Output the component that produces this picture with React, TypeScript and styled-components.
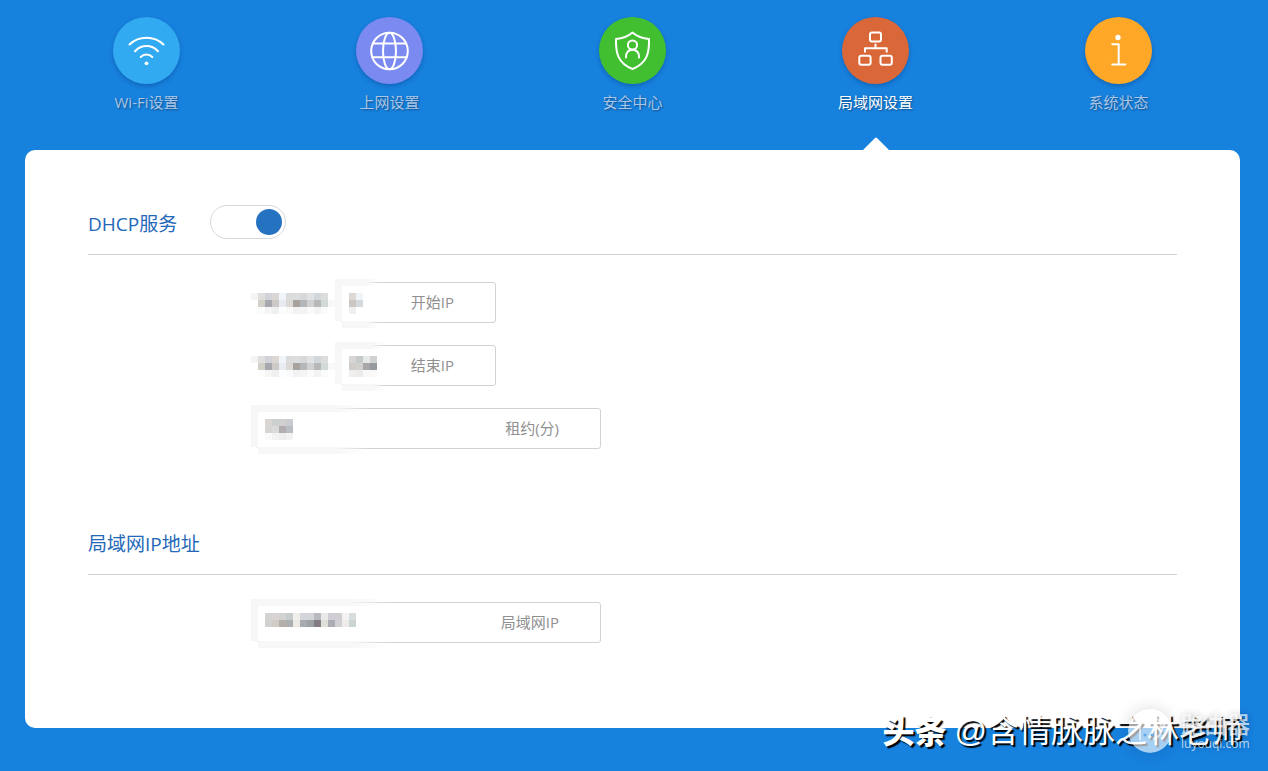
import React, { useState } from "react";
import styled, { createGlobalStyle } from "styled-components";

const GlobalStyle = createGlobalStyle`
  * { box-sizing: border-box; }
  body {
    margin: 0;
    background: #1781de;
    font-family: "Open Sans", "Noto Sans CJK SC", sans-serif;
    font-size: 15px;
    font-weight: 390;
  }
`;

const Page = styled.div`
  position: relative;
  padding: 0 28px 43px 25px;
`;

const Nav = styled.nav`
  display: grid;
  grid-template-columns: repeat(5, 1fr);
  height: 150px;
`;

const NavLink = styled.a<{ $active?: boolean }>`
  position: relative;
  display: flex;
  flex-direction: column;
  align-items: center;
  gap: 7px;
  padding-top: 17px;
  line-height: 22px;
  text-decoration: none;
  color: ${(p) => (p.$active ? "#ffffff" : "#a9c6e8")};
  font-weight: ${(p) => (p.$active ? 400 : 390)};
  text-shadow: 1px 1px 2px rgba(0, 0, 0, 0.4);
`;

const Pointer = styled.svg`
  position: absolute;
  bottom: 0;
  left: 50%;
  margin-left: -13px;
`;

const Badge = styled.span<{ $color: string }>`
  width: 67px;
  height: 67px;
  border-radius: 50%;
  background: ${(p) => p.$color};
  box-shadow: 0 2px 4px rgba(0, 40, 100, 0.3);

  svg {
    display: block;
    fill: none;
    stroke: #ffffff;
    stroke-width: 2;
    stroke-linecap: round;
    stroke-linejoin: round;
  }
`;

const Panel = styled.main`
  padding: 55px 63px 85px;
  border-radius: 10px;
  background: #ffffff;
`;

const Section = styled.section`
  & + & {
    margin-top: 76px;
  }
`;

const SectionHead = styled.header`
  display: flex;
  align-items: center;
  gap: 33px;
  height: 50px;
  padding-bottom: 15px;
  border-bottom: 1px solid #d2d2d2;
`;

const Title = styled.h2`
  margin: 0;
  padding-top: 4px;
  font-size: 19px;
  line-height: 34px;
  font-weight: 390;
  color: #2468b8;
`;

const Switch = styled.input`
  appearance: none;
  width: 76px;
  height: 34px;
  margin: 0;
  padding: 3px;
  border: 1px solid #d8d8d8;
  border-radius: 17px;
  background: #ffffff;
  cursor: pointer;

  &::before {
    content: "";
    display: block;
    width: 26px;
    height: 26px;
    border-radius: 50%;
    background: #9aa5b1;
  }

  &:checked::before {
    margin-left: auto;
    background: #2472c0;
  }
`;

const Fields = styled.div`
  display: flex;
  flex-direction: column;
  gap: 22px;
  padding: 27px 0 0 163px;
`;

const Row = styled.div`
  display: flex;
  align-items: center;
`;

const Prefix = styled.div`
  display: flex;
  width: 90px;
  padding-top: 2px;
`;

const Field = styled.div<{ $wide?: boolean }>`
  position: relative;
  display: flex;
  align-items: center;
  width: ${(p) => (p.$wide ? "344px" : "155px")};
  height: 41px;
  margin-left: ${(p) => (p.$wide ? "6px" : "0")};
  padding-right: 41px;
  border: 1px solid #d2d2d2;
  border-radius: 3px;
`;

const TextInput = styled.input`
  flex: 1;
  min-width: 0;
  height: 39px;
  padding: 0 8px;
  border: 0;
  outline: 0;
  background: transparent;
  font: inherit;
  color: #555555;
`;

const FieldLabel = styled.label`
  padding-bottom: 2px;
  color: #909090;
`;

const Mask = styled.svg`
  position: absolute;
  left: -7px;
  top: -4px;
  pointer-events: none;
`;

const Watermark = styled.div`
  position: absolute;
  right: 25px;
  bottom: 17px;
  display: flex;
  gap: 8px;
  font-size: 32px;
  line-height: 46px;
  font-weight: 400;
  color: #ffffff;
  text-shadow: 2px 2px 1px #000000;
  white-space: nowrap;

  strong {
    font-weight: 900;
  }

  span {
    font-family: "Liberation Sans", "Noto Sans CJK SC", sans-serif;
  }
`;

const SiteMark = styled.div`
  position: absolute;
  right: 18px;
  bottom: 18px;
  display: flex;
  align-items: center;
  gap: 9px;
  color: rgba(255, 255, 255, 0.7);
  text-shadow: 0 0 6px rgba(0, 0, 0, 0.25);

  svg {
    border-radius: 50%;
    box-shadow: 0 0 16px rgba(0, 0, 0, 0.15);
  }
`;

const SiteText = styled.div`
  display: flex;
  flex-direction: column;
  font-size: 23px;
  line-height: 26px;
  font-weight: 500;

  small {
    font-size: 12px;
    line-height: 14px;
    font-weight: 400;
  }
`;

const CELL = 7;

function Cells({ rows, x = 0, y = 0 }: { rows: string[]; x?: number; y?: number }) {
  return (
    <g shapeRendering="crispEdges">
      {rows.map((row, r) =>
        row.split(" ").map((c, i) =>
          c === "-" ? null : (
            <rect key={`${r}-${i}`} x={x + i * CELL} y={y + r * CELL} width={CELL} height={CELL} fill={`#${c}`} />
          )
        )
      )}
    </g>
  );
}

const PREFIX_ROWS = [
  "f5f4f3 dfdfe0 d2d3d6 dad7d5 f1f5fa dadbdc dcdddf d6d8da e0e2e3 d3d6da dcdddd",
  "- d3d0c8 a6a8ae cdc9c9 e8ecf2 dbdad6 a8a29f b4b6b9 cfd1d3 b8b8b8 d3d9d6 f8f8f8",
  "- fbfcfb f5f5f5 efeff0 fcfdff fafafa f3f2f2 f4f4f4 fafafa f3f3f3 fbfbfb",
];

function PrefixMask() {
  return (
    <Prefix>
      <svg width="84" height="21" aria-hidden="true">
        <Cells rows={PREFIX_ROWS} />
      </svg>
    </Prefix>
  );
}

function FieldMask({ id, width, rows }: { id: string; width: number; rows: string[] }) {
  return (
    <Mask width={width} height="49" aria-hidden="true">
      <defs>
        <linearGradient id={`${id}-edge`}>
          <stop offset="0.7" stopColor="#f7f7f7" />
          <stop offset="1" stopColor="#f7f7f7" stopOpacity="0" />
        </linearGradient>
      </defs>
      <rect width={width} height="7" fill={`url(#${id}-edge)`} />
      <rect x="7" y="42" width={width - 7} height="7" fill={`url(#${id}-edge)`} />
      <rect y="0" width="7" height="42" fill="#f7f7f7" />
      <rect x="7" y="7" width="28" height="35" fill="#ffffff" />
      <Cells rows={rows} x={14} y={14} />
    </Mask>
  );
}

type FieldProps = { id: string; label: string; wide?: boolean; maskWidth: number; rows: string[] };

function IpField({ id, label, wide, maskWidth, rows }: FieldProps) {
  return (
    <Field $wide={wide}>
      <TextInput id={id} type="text" />
      <FieldLabel htmlFor={id}>{label}</FieldLabel>
      <FieldMask id={id} width={maskWidth} rows={rows} />
    </Field>
  );
}

const NAV = [
  {
    label: "Wi-Fi设置",
    color: "#31aaf2",
    icon: (
      <>
        <path d="M16.5 27.5C26 18.5 41 18.5 50.5 27.5M22 34.2C28.5 27.4 38.5 27.4 45 34.2M27.7 40C31 36.8 36 36.8 39.3 40" />
        <circle cx="33.5" cy="46.3" r="1.9" fill="#fff" stroke="none" />
      </>
    ),
  },
  {
    label: "上网设置",
    color: "#7b8af0",
    icon: (
      <>
        <circle cx="33.5" cy="34" r="18.3" />
        <ellipse cx="33.5" cy="34" rx="6.5" ry="18.3" />
        <path d="M17 26.4H50M16.5 40.2H50.5" />
      </>
    ),
  },
  {
    label: "安全中心",
    color: "#41bf30",
    icon: (
      <>
        <path d="M33.5 15.5C29 19.5 23.5 21.5 17 22C16.6 36 19 46.5 33.5 52C48 46.5 50.4 36 50 22C43.5 21.5 38 19.5 33.5 15.5Z" />
        <circle cx="33.5" cy="28" r="4.6" />
        <path d="M27 40.5C27 35.5 29.5 32.8 33.5 32.8S40 35.5 40 40.5" />
      </>
    ),
  },
  {
    label: "局域网设置",
    color: "#da6737",
    active: true,
    icon: (
      <>
        <rect x="28" y="15.5" width="11" height="9" rx="2" />
        <rect x="17.3" y="38.7" width="11.3" height="9" rx="2" />
        <rect x="38.5" y="38.7" width="11.3" height="9" rx="2" />
        <path d="M33.5 27.5V31.2M23 34.8V31.2H44.7V34.8" />
      </>
    ),
  },
  {
    label: "系统状态",
    color: "#ffa726",
    icon: (
      <>
        <circle cx="33" cy="20.5" r="2.7" fill="#fff" stroke="none" />
        <path d="M27.2 27.2H33.7V47.4M27.2 47.4H40.3" />
      </>
    ),
  },
];

export default function App() {
  const [dhcp, setDhcp] = useState(true);
  return (
    <Page>
      <GlobalStyle />
      <Nav>
        {NAV.map((item) => (
          <NavLink key={item.label} href="#" $active={item.active}>
            <Badge $color={item.color}>
              <svg width="67" height="67" viewBox="0 0 67 67" aria-hidden="true">
                {item.icon}
              </svg>
            </Badge>
            {item.label}
            {item.active && (
              <Pointer width="26" height="13" viewBox="0 0 26 13" aria-hidden="true">
                <path d="M0 13L12 1Q13 0 14 1L26 13Z" fill="#fff" />
              </Pointer>
            )}
          </NavLink>
        ))}
      </Nav>

      <Panel>
        <Section>
          <SectionHead>
            <Title id="dhcp-title">DHCP服务</Title>
            <Switch
              type="checkbox"
              aria-labelledby="dhcp-title"
              checked={dhcp}
              onChange={(e) => setDhcp(e.target.checked)}
            />
          </SectionHead>
          <Fields>
            <Row>
              <PrefixMask />
              <IpField
                id="start-ip"
                label="开始IP"
                maskWidth={44}
                rows={["dcd8d3 f0f4f9", "cbc5c3 d4d9dc", "efefef -"]}
              />
            </Row>
            <Row>
              <PrefixMask />
              <IpField
                id="end-ip"
                label="结束IP"
                maskWidth={50}
                rows={["d7d6d4 c7caca e6e8ea d0d2d2", "cfccc9 d0d0cf a8a6a6 959b9e", "f0efee ebebeb f8f8f8 fafafa"]}
              />
            </Row>
            <Row>
              <IpField
                id="lease"
                label="租约(分)"
                wide
                maskWidth={118}
                rows={["dad6d4 ccd0d1 d0cecf c8ccd0", "d8d4d4 dadadb b0acaf babdc2", "fafafa f2f2f2 eeeeee f2f2f2"]}
              />
            </Row>
          </Fields>
        </Section>

        <Section>
          <SectionHead>
            <Title>局域网IP地址</Title>
          </SectionHead>
          <Fields>
            <Row>
              <IpField
                id="lan-ip"
                label="局域网IP"
                wide
                maskWidth={140}
                rows={[
                  "d3d3d2 d8d4d3 d2d3d3 c6cbcb f1efeb d3d6da d2d4d6 b9babe e8e9e8 d0ced4 d0ced2 f5f3f2 d8dedf",
                  "d2d1cf d0cdc4 b4afaa acafb2 eeebe6 a8aab2 9da3a4 847c84 dedfd9 acadb5 d2d0d3 eeece8 cdd5d3",
                ]}
              />
            </Row>
          </Fields>
        </Section>
      </Panel>

      <Watermark>
        <strong>头条</strong>
        <span>@含情脉脉之林老师</span>
      </Watermark>
      <SiteMark>
        <svg width="44" height="44" viewBox="0 0 44 44" aria-hidden="true">
          <circle cx="22" cy="22" r="22" fill="#fff" fillOpacity="0.62" />
          <g fill="none" stroke="#fff" strokeOpacity="0.6" strokeWidth="2">
            <path d="M12 31V20A11 11 0 1 1 25 30" />
          </g>
          <g fill="#5fa9e8">
            <circle cx="17" cy="26" r="1.5" />
            <circle cx="24" cy="26" r="1.5" />
          </g>
        </svg>
        <SiteText>
          路由器
          <small>luyouqi.com</small>
        </SiteText>
      </SiteMark>
    </Page>
  );
}
